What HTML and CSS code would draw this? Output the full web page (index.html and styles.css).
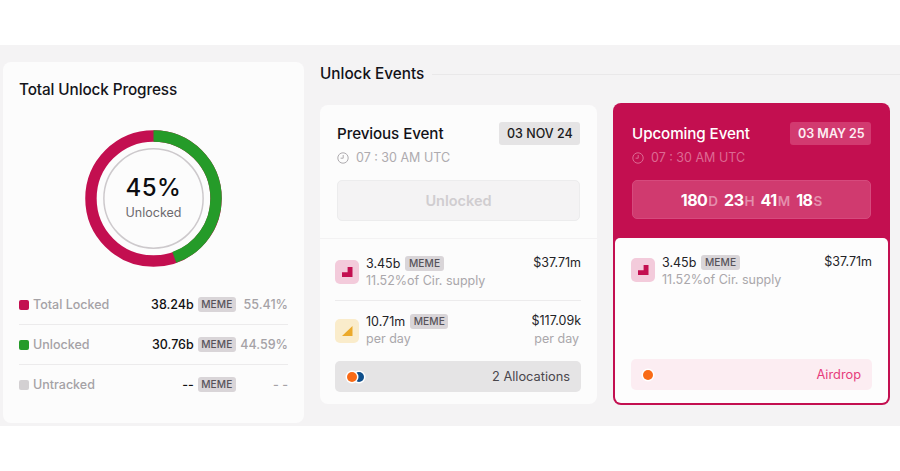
FILE: index.html
```html
<!DOCTYPE html>
<html lang="en">
<head>
<meta charset="utf-8">
<title>Unlock</title>
<link rel="stylesheet" href="styles.css">
</head>
<body>
<main class="band">
  <section class="progress">
    <h2 class="progress-title">Total Unlock Progress</h2>
    <div class="donut">
      <svg class="donut-svg" viewBox="0 0 138 138" width="137" height="137">
        <circle class="ring-locked" cx="69" cy="69" r="63" pathLength="100"></circle>
        <circle class="ring-unlocked" cx="69" cy="69" r="63" pathLength="100" stroke-dasharray="44.59 55.41" transform="rotate(-90 69 69)"></circle>
        <circle class="ring-inner" cx="69" cy="69" r="50"></circle>
      </svg>
      <div class="donut-label">
        <div class="donut-pct">45%</div>
        <div class="donut-sub">Unlocked</div>
      </div>
    </div>
    <ul class="legend">
      <li class="legend-row"><span class="sw sw-red"></span><span class="legend-name">Total Locked</span><span class="legend-val">38.24b</span><span class="tag">MEME</span><span class="legend-pct">55.41%</span></li>
      <li class="legend-row"><span class="sw sw-green"></span><span class="legend-name">Unlocked</span><span class="legend-val">30.76b</span><span class="tag">MEME</span><span class="legend-pct">44.59%</span></li>
      <li class="legend-row"><span class="sw sw-gray"></span><span class="legend-name">Untracked</span><span class="legend-val">--</span><span class="tag">MEME</span><span class="legend-pct">- -</span></li>
    </ul>
  </section>

  <section class="events">
    <header class="events-head"><h2 class="events-title">Unlock Events</h2><span class="events-line"></span></header>
    <div class="event-cards">
      <article class="event event-prev">
        <div class="event-top">
          <div class="event-titlebar"><h3 class="event-title">Previous Event</h3><span class="date">03 NOV 24</span></div>
          <div class="event-time">
            <svg class="clock" viewBox="0 0 12 12" width="12" height="12"><circle cx="6" cy="6" r="5.2"></circle><path d="M6.2 3v3.2H3.6"></path></svg>
            <span>07 : 30 AM UTC</span>
          </div>
          <div class="status">Unlocked</div>
        </div>
        <div class="event-body">
          <div class="row">
            <span class="ico ico-pink"><svg viewBox="0 0 12 12" width="12" height="12"><path d="M6.6 1H11.5V11H1V6.2H6.6Z"></path></svg></span>
            <div class="row-main"><div class="row-line"><span>3.45b</span><span class="tag">MEME</span></div><div class="row-sub">11.52%of Cir. supply</div></div>
            <div class="row-side"><div>$37.71m</div></div>
          </div>
          <div class="row row-divided">
            <span class="ico ico-yellow"><svg viewBox="0 0 12 12" width="12" height="12"><path d="M11.5 1V11H1Z"></path></svg></span>
            <div class="row-main"><div class="row-line"><span>10.71m</span><span class="tag">MEME</span></div><div class="row-sub">per day</div></div>
            <div class="row-side"><div>$117.09k</div><div class="row-sub side-sub">per day</div></div>
          </div>
          <div class="alloc alloc-gray">
            <span class="dots"><span class="dot dot-orange"></span><span class="dot dot-blue"></span></span>
            <span>2 Allocations</span>
          </div>
        </div>
      </article>

      <article class="event event-next">
        <div class="event-top event-top-next">
          <div class="event-titlebar"><h3 class="event-title">Upcoming Event</h3><span class="date date-next">03 MAY 25</span></div>
          <div class="event-time time-next">
            <svg class="clock" viewBox="0 0 12 12" width="12" height="12"><circle cx="6" cy="6" r="5.2"></circle><path d="M6.2 3v3.2H3.6"></path></svg>
            <span>07 : 30 AM UTC</span>
          </div>
          <div class="count">
            <span class="unit"><b>180</b><i>D</i></span><span class="unit"><b>23</b><i>H</i></span><span class="unit"><b>41</b><i>M</i></span><span class="unit"><b>18</b><i>S</i></span>
          </div>
        </div>
        <div class="event-body body-next">
          <div class="row">
            <span class="ico ico-pink"><svg viewBox="0 0 12 12" width="12" height="12"><path d="M6.6 1H11.5V11H1V6.2H6.6Z"></path></svg></span>
            <div class="row-main"><div class="row-line"><span>3.45b</span><span class="tag">MEME</span></div><div class="row-sub">11.52%of Cir. supply</div></div>
            <div class="row-side"><div>$37.71m</div></div>
          </div>
          <div class="alloc alloc-pink">
            <span class="dots"><span class="dot dot-orange"></span></span>
            <span>Airdrop</span>
          </div>
        </div>
      </article>
    </div>
  </section>
</main>
</body>
</html>
```

FILE: styles.css
```css
* { box-sizing: border-box; }
html, body { margin: 0; padding: 0; background: #fff; }
body { font-family: Inter, "Liberation Sans", sans-serif; color: #111; width: 900px; height: 471px; overflow: hidden; padding-top: 45px; }
h2, h3, ul { margin: 0; padding: 0; font-weight: 500; }
ul { list-style: none; }

.band { display: flex; align-items: flex-start; gap: 16px; height: 381px; background: #f4f3f4; padding: 17px 0 0 3px; }

.progress { width: 301px; height: 361px; flex: none; background: #fcfcfc; border-radius: 8px; padding: 18px 16px 0; display: flex; flex-direction: column; }
.progress-title { font-size: 15.3px; line-height: 19px; color: #14141a; letter-spacing: -0.1px; }
.donut { position: relative; width: 137px; height: 137px; margin: 31px auto 0; }
.donut-svg { display: block; }
.donut-svg circle { fill: none; }
.ring-locked { stroke: #c30f50; stroke-width: 11.5; }
.ring-unlocked { stroke: #259b29; stroke-width: 11.5; }
.ring-inner { stroke: #cdc9cc; stroke-width: 1.5; }
.donut-label { position: absolute; inset: 0; display: flex; flex-direction: column; align-items: center; justify-content: center; padding-bottom: 4px; }
.donut-pct { font-size: 24px; line-height: 28px; font-weight: 500; color: #0c0c10; letter-spacing: 0.5px; margin-top: 1px; }
.donut-sub { font-size: 12.5px; line-height: 16px; color: #6d6a6f; margin-top: 3px; }

.legend { margin-top: 18px; }
.legend-row { display: flex; align-items: center; height: 40px; font-size: 12.5px; border-bottom: 1px solid #ecebec; }
.legend-row:last-child { border-bottom: 0; height: 39px; }
.sw { width: 10px; height: 10px; border-radius: 2px; margin-right: 4px; flex: none; }
.sw-red { background: #c30f50; }
.sw-green { background: #259b29; }
.sw-gray { background: #d3d0d2; }
.legend-name { color: #a5a2a6; flex: 1; }
.legend-val { color: #111; margin-right: 4px; }
.legend-pct { width: 52px; text-align: right; color: #a5a2a6; }
.tag { display: inline-block; background: #d9d5d8; color: #57535a; font-size: 10.2px; line-height: 15px; font-weight: 500; border-radius: 3px; padding: 0 3.5px; letter-spacing: 0.1px; }

.events { flex: 1; min-width: 0; padding-top: 1px; }
.events-head { display: flex; align-items: center; gap: 8px; height: 22px; }
.events-title { font-size: 15.3px; line-height: 22px; color: #121218; flex: none; }
.events-line { flex: 1; height: 1px; background: #e9e8e9; }

.event-cards { display: flex; align-items: flex-start; gap: 16px; margin-top: 18px; }
.event { width: 277px; border-radius: 8px; flex: none; }
.event-prev { background: #fcfcfc; margin-top: 2px; height: 299px; display: flex; flex-direction: column; }
.event-next { background: #c30f50; padding: 2px; height: 302px; display: flex; flex-direction: column; }

.event-top { padding: 17px 17px 18px; height: 134px; flex: none; border-bottom: 1px solid #f3f2f3; }
.event-top-next { padding: 17px 17px 0; border: 0; height: 133px; }
.event-titlebar { display: flex; justify-content: space-between; align-items: center; height: 23px; }
.event-title { font-size: 15.2px; line-height: 23px; color: #121218; letter-spacing: -0.1px; }
.date { background: #e5e4e5; border-radius: 3px; font-size: 12.5px; font-weight: 500; line-height: 23px; padding: 0 8px; color: #1b1b20; width: 81px; text-align: center; white-space: nowrap; }
.date-next { background: #d23a70; color: #fdeef3; font-weight: 600; }
.event-top-next .event-title { color: #fff; }

.event-time { display: flex; align-items: center; gap: 7px; font-size: 12.5px; line-height: 16px; color: #aeabaf; margin-top: 4px; height: 18px; }
.clock { flex: none; }
.clock circle, .clock path { fill: none; stroke: currentColor; stroke-width: 1; }
.time-next { color: #dd6a93; }

.status { margin-top: 13px; height: 41px; background: #f4f3f4; border: 1px solid #ececed; border-radius: 5px; display: flex; align-items: center; justify-content: center; color: #d0cdd0; font-size: 14.5px; font-weight: 600; }
.count { margin-top: 13px; height: 39px; background: #d03a6f; border: 1px solid #d64a7d; border-radius: 5px; display: flex; align-items: center; justify-content: center; gap: 6px; }
.unit { display: inline-flex; align-items: baseline; gap: 1px; }
.unit b { color: #fff; font-size: 16px; font-weight: 700; letter-spacing: -0.5px; }
.unit i { font-style: normal; font-size: 13.5px; font-weight: 600; color: #e48eac; }

.event-body { flex: 1; padding: 0 16px 12px 15px; display: flex; flex-direction: column; min-height: 0; }
.body-next { background: #fdfdfd; border-radius: 5px 5px 6px 6px; padding: 0 16px 13px 16px; }
.row { display: flex; align-items: flex-start; padding-top: 15px; height: 61px; font-size: 12.5px; }
.row-divided { border-top: 1px solid #ecebec; height: 60px; padding-top: 11px; }
.ico { width: 24px; height: 24px; border-radius: 5px; display: flex; align-items: center; justify-content: center; flex: none; margin: 6px 7px 0 0; }
.row-divided .ico { margin-top: 7px; }
.body-next .ico { margin-top: 5px; }
.ico-pink { background: #f3cbdb; }
.ico-pink path { fill: #c30f50; }
.ico-yellow { background: #faeccb; }
.ico-yellow path { fill: #eba92a; }
.row-main { flex: 1; min-width: 0; }
.row-line { display: flex; align-items: center; gap: 5px; height: 18px; color: #232327; }
.row-sub { color: #aaa7ab; line-height: 18px; height: 18px; }
.row-side { text-align: right; color: #232327; line-height: 18px; }
.side-sub { padding-right: 2px; }

.alloc { height: 31px; margin-top: auto; border-radius: 5px; display: flex; align-items: center; justify-content: space-between; font-size: 12.8px; padding: 0 11px 0 12px; }
.alloc-gray { background: #e5e4e5; color: #4a474c; }
.alloc-pink { background: #fcedf2; color: #e63c7b; }
.dots { display: flex; }
.dot { width: 10px; height: 10px; border-radius: 50%; box-shadow: 0 0 0 1.5px #fff; display: block; }
.dot-orange { background: #f96a16; position: relative; z-index: 1; }
.dot-blue { background: #0f4f8b; margin-left: -3px; }
```
